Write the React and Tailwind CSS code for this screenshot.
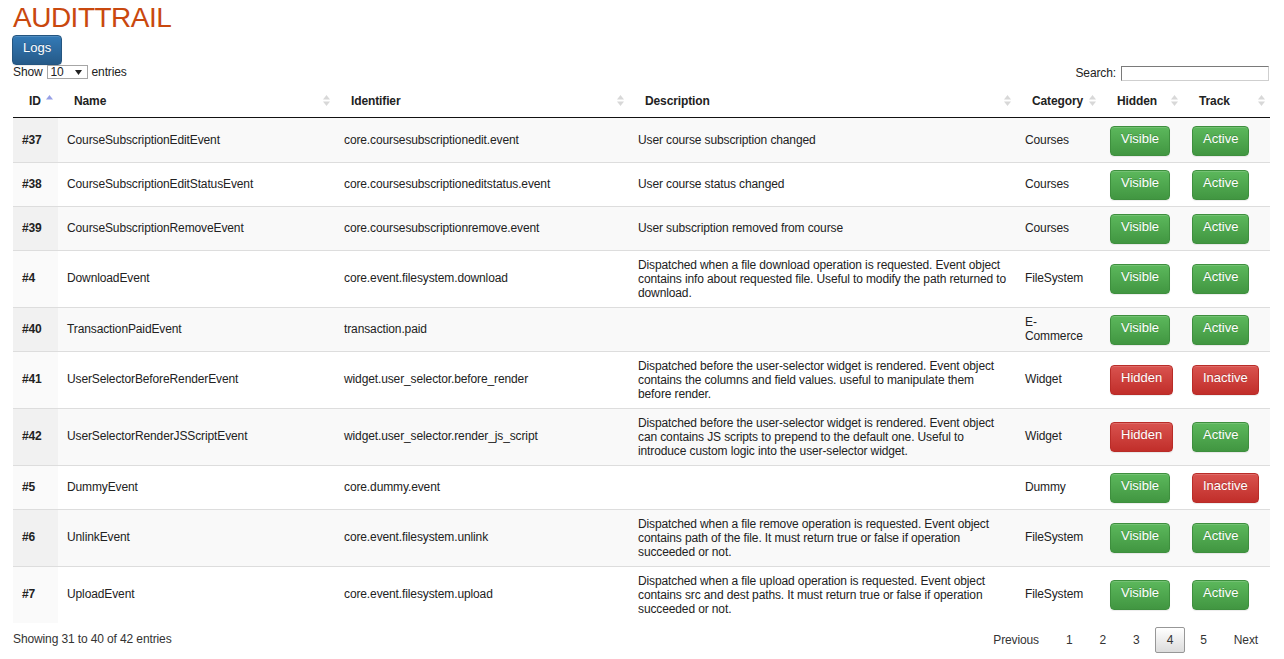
import React from "react";

const rows = [
  { id: "#37", name: "CourseSubscriptionEditEvent", ident: "core.coursesubscriptionedit.event", desc: "User course subscription changed", cat: "Courses", visible: true, active: true },
  { id: "#38", name: "CourseSubscriptionEditStatusEvent", ident: "core.coursesubscriptioneditstatus.event", desc: "User course status changed", cat: "Courses", visible: true, active: true },
  { id: "#39", name: "CourseSubscriptionRemoveEvent", ident: "core.coursesubscriptionremove.event", desc: "User subscription removed from course", cat: "Courses", visible: true, active: true },
  { id: "#4", name: "DownloadEvent", ident: "core.event.filesystem.download", desc: "Dispatched when a file download operation is requested. Event object contains info about requested file. Useful to modify the path returned to download.", cat: "FileSystem", visible: true, active: true, multi: true },
  { id: "#40", name: "TransactionPaidEvent", ident: "transaction.paid", desc: "", cat: "E-Commerce", visible: true, active: true },
  { id: "#41", name: "UserSelectorBeforeRenderEvent", ident: "widget.user_selector.before_render", desc: "Dispatched before the user-selector widget is rendered. Event object contains the columns and field values. useful to manipulate them before render.", cat: "Widget", visible: false, active: false, multi: true },
  { id: "#42", name: "UserSelectorRenderJSScriptEvent", ident: "widget.user_selector.render_js_script", desc: "Dispatched before the user-selector widget is rendered. Event object can contains JS scripts to prepend to the default one. Useful to introduce custom logic into the user-selector widget.", cat: "Widget", visible: false, active: true, multi: true },
  { id: "#5", name: "DummyEvent", ident: "core.dummy.event", desc: "", cat: "Dummy", visible: true, active: false },
  { id: "#6", name: "UnlinkEvent", ident: "core.event.filesystem.unlink", desc: "Dispatched when a file remove operation is requested. Event object contains path of the file. It must return true or false if operation succeeded or not.", cat: "FileSystem", visible: true, active: true, multi: true },
  { id: "#7", name: "UploadEvent", ident: "core.event.filesystem.upload", desc: "Dispatched when a file upload operation is requested. Event object contains src and dest paths. It must return true or false if operation succeeded or not.", cat: "FileSystem", visible: true, active: true, multi: true },
];

function Btn({ ok, children }) {
  const base =
    "inline-block align-middle h-[30px] -my-[0.5px] px-[10px] pb-[4px] rounded-[4px] border text-[13px] leading-[24px] tracking-normal text-white [text-shadow:0_-1px_0_rgba(0,0,0,0.2)] shadow-[inset_0_1px_0_rgba(255,255,255,0.15),0_1px_1px_rgba(0,0,0,0.075)]";
  return ok ? (
    <span className={base + " border-[#3e8f3e] bg-[linear-gradient(to_bottom,#5cb85c_0%,#419641_100%)]"}>{children}</span>
  ) : (
    <span className={base + " border-[#b92c28] bg-[linear-gradient(to_bottom,#d9534f_0%,#c12e2a_100%)]"}>{children}</span>
  );
}

function SortIcon({ asc }) {
  return (
    <svg className="absolute right-[5px] top-[10px]" width="7" height="11" viewBox="0 0 7 11">
      <path d="M0 4.5 L3.5 0 L7 4.5 Z" fill={asc ? "#97a0e6" : "#d8d8d8"} />
      {!asc && <path d="M0 6.5 L7 6.5 L3.5 11 Z" fill="#d8d8d8" />}
    </svg>
  );
}

function Th({ children, asc }) {
  return (
    <th className="relative text-left font-bold pl-[16px] pr-[18px] pt-[9px] pb-[9px] leading-[14px] border-b border-[#111]">
      {children}
      <SortIcon asc={asc} />
    </th>
  );
}

export default function App() {
  return (
    <div className="min-h-[659px] bg-white pl-[13px] pr-[14px] font-['Liberation_Sans',Arial,sans-serif] text-[12px] tracking-[-0.12px] text-[#222]">
      <h1 className="h-[35px] text-[28px] leading-[35px] tracking-[-0.5px] font-normal text-[#c9480e]">AUDITTRAIL</h1>
      <button className="block -ml-px h-[30px] px-[10px] pb-[4px] rounded-[4px] border border-[#245580] bg-[linear-gradient(to_bottom,#337ab7_0%,#265a88_100%)] text-[13px] leading-[24px] tracking-normal text-white [text-shadow:0_-1px_0_rgba(0,0,0,0.2)] shadow-[inset_0_1px_0_rgba(255,255,255,0.15),0_1px_1px_rgba(0,0,0,0.075)]">
        Logs
      </button>
      <div className="flex h-[14px] items-center justify-between">
        <div className="flex items-center">
          <span className="leading-[14px]">Show</span>
          <div className="ml-[4px] flex h-[14px] w-[41px] items-center justify-between border border-[#a6a6a6] bg-white pl-[3px] pr-[5px]">
            <span className="text-[12px] leading-[12px]">10</span>
            <svg width="7" height="5" viewBox="0 0 7 5">
              <path d="M0 0 L7 0 L3.5 5 Z" fill="#222" />
            </svg>
          </div>
          <span className="ml-[4px] leading-[14px]">entries</span>
        </div>
        <div className="flex items-center">
          <span className="mt-[1px] leading-[14px]">Search:</span>
          <div className="ml-[5px] mr-px mt-[2px] h-[15px] w-[148px] border border-t-[#7a7a7a] border-l-[#7a7a7a] border-r-[#cfcfcf] border-b-[#cfcfcf] bg-white" />
        </div>
      </div>
      <table className="mt-[6px] w-full table-fixed border-separate border-spacing-0">
        <colgroup>
          <col className="w-[45px]" />
          <col className="w-[277px]" />
          <col className="w-[294px]" />
          <col className="w-[387px]" />
          <col className="w-[85px]" />
          <col className="w-[82px]" />
          <col className="w-[87px]" />
        </colgroup>
        <thead>
          <tr>
            <Th asc>ID</Th>
            <Th>Name</Th>
            <Th>Identifier</Th>
            <Th>Description</Th>
            <Th>Category</Th>
            <Th>Hidden</Th>
            <Th>Track</Th>
          </tr>
        </thead>
        <tbody>
          {rows.map((r, i) => {
            const odd = i % 2 === 0;
            const first = i === 0;
            const base = "px-[9px] align-middle leading-[14px] " + (first ? "" : "border-t border-[#ddd] ");
            const btnTd = base + (first ? "pt-[8px] pb-[7px] " : "pt-[7px] pb-[7px] ");
            const txtTd = base + (first ? "pt-[7px] pb-[8px] " : "pt-[6px] pb-[8px] ");
            const descTd = r.multi ? base + "pt-[7px] pb-[7px] " : txtTd;
            const rowBg = odd ? "bg-[#f9f9f9] " : "bg-white ";
            const idBg = odd ? "bg-[#f1f1f1] " : "bg-[#fafafa] ";
            return (
              <tr key={r.id}>
                <td className={txtTd + idBg + "font-bold"}>{r.id}</td>
                <td className={txtTd + rowBg}>{r.name}</td>
                <td className={txtTd + rowBg}>{r.ident}</td>
                <td className={descTd + rowBg}>{r.desc}</td>
                <td className={txtTd + rowBg}>{r.cat}</td>
                <td className={btnTd + rowBg}>
                  <Btn ok={r.visible}>{r.visible ? "Visible" : "Hidden"}</Btn>
                </td>
                <td className={btnTd + rowBg}>
                  <Btn ok={r.active}>{r.active ? "Active" : "Inactive"}</Btn>
                </td>
              </tr>
            );
          })}
        </tbody>
      </table>
      <div className="flex items-start justify-between">
        <div className="pt-[9px] leading-[14px] text-[#333]">Showing 31 to 40 of 42 entries</div>
        <div className="flex pt-[4px] text-[#333]">
          <span className="h-[26px] border border-transparent px-[11px] leading-[24px]">Previous</span>
          <span className="ml-[3px] h-[26px] border border-transparent px-[11px] leading-[24px]">1</span>
          <span className="ml-[3px] h-[26px] border border-transparent px-[11px] leading-[24px]">2</span>
          <span className="ml-[3px] h-[26px] border border-transparent px-[11px] leading-[24px]">3</span>
          <span className="ml-[3px] h-[26px] rounded-[2px] border border-[#979797] bg-[linear-gradient(to_bottom,#ffffff_0%,#dcdcdc_100%)] px-[11px] leading-[24px]">4</span>
          <span className="ml-[3px] h-[26px] border border-transparent px-[11px] leading-[24px]">5</span>
          <span className="ml-[3px] h-[26px] border border-transparent px-[11px] leading-[24px]">Next</span>
        </div>
      </div>
    </div>
  );
}
